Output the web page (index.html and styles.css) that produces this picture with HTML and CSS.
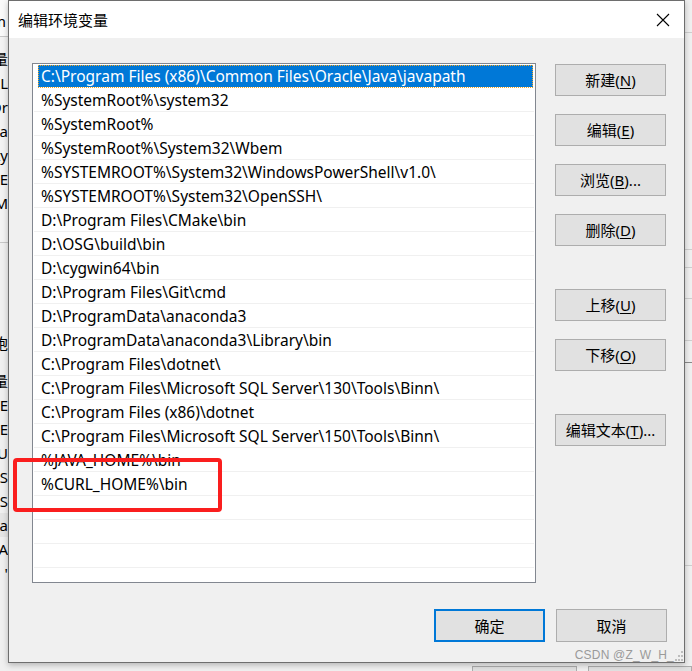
FILE: index.html
```html
<!DOCTYPE html>
<html lang="zh-CN">
<head>
<meta charset="utf-8">
<title>编辑环境变量</title>
<link rel="stylesheet" href="styles.css">
</head>
<body>
<div class="desk">
  <div class="bgwin bgwin-left">
    <div class="bl-top"><span class="frag f1">m</span></div>
    <div class="bl-mid">
      <div class="frag">变量</div>
      <div class="frag">URL</div>
      <div class="frag">Or</div>
      <div class="frag">ta</div>
      <div class="frag">ty</div>
      <div class="frag">TE</div>
      <div class="frag">M</div>
    </div>
    <div class="bl-low">
      <div class="frag">砲</div>
      <div class="frag gap">变量</div>
      <div class="frag">TE</div>
      <div class="frag">TE</div>
      <div class="frag">IU</div>
      <div class="frag">OS</div>
      <div class="frag">OS</div>
      <div class="frag sel">ta</div>
      <div class="frag">A</div>
      <div class="frag">'</div>
    </div>
  </div>
  <div class="bgwin bgwin-right">
    <div class="br-row r1"></div>
    <div class="br-row r2"></div>
    <div class="br-row r3"></div>
    <div class="br-row r4"></div>
    <div class="br-row r5"></div>
    <div class="br-row r6"></div>
    <div class="br-row r7"></div>
  </div>
  <div class="bgwin bgwin-bottom">
    <div class="bb-btn"></div>
    <div class="bb-btn"></div>
  </div>

  <div class="dialog">
    <div class="titlebar">
      <span class="title">编辑环境变量</span>
      <svg class="close" width="14" height="14" viewBox="0 0 14 14"><path d="M1 1 L13 13 M13 1 L1 13" stroke="#000" stroke-width="1.1" fill="none"/></svg>
    </div>
    <div class="client">
      <div class="main">
        <div class="listbox">
          <div class="row selected"><span>C:\Program Files (x86)\Common Files\Oracle\Java\javapath</span></div>
          <div class="row"><span>%SystemRoot%\system32</span></div>
          <div class="row"><span>%SystemRoot%</span></div>
          <div class="row"><span>%SystemRoot%\System32\Wbem</span></div>
          <div class="row"><span>%SYSTEMROOT%\System32\WindowsPowerShell\v1.0\</span></div>
          <div class="row"><span>%SYSTEMROOT%\System32\OpenSSH\</span></div>
          <div class="row"><span>D:\Program Files\CMake\bin</span></div>
          <div class="row"><span>D:\OSG\build\bin</span></div>
          <div class="row"><span>D:\cygwin64\bin</span></div>
          <div class="row"><span>D:\Program Files\Git\cmd</span></div>
          <div class="row"><span>D:\ProgramData\anaconda3</span></div>
          <div class="row"><span>D:\ProgramData\anaconda3\Library\bin</span></div>
          <div class="row"><span>C:\Program Files\dotnet\</span></div>
          <div class="row"><span>C:\Program Files\Microsoft SQL Server\130\Tools\Binn\</span></div>
          <div class="row"><span>C:\Program Files (x86)\dotnet</span></div>
          <div class="row"><span>C:\Program Files\Microsoft SQL Server\150\Tools\Binn\</span></div>
          <div class="row"><span>%JAVA_HOME%\bin</span></div>
          <div class="row"><span>%CURL_HOME%\bin</span></div>
          <div class="row"></div>
          <div class="row"></div>
          <div class="row"></div>
        </div>
        <div class="sidebtns">
          <button class="btn">新建(<u>N</u>)</button>
          <button class="btn">编辑(<u>E</u>)</button>
          <button class="btn">浏览(<u>B</u>)...</button>
          <button class="btn">删除(<u>D</u>)</button>
          <button class="btn sep">上移(<u>U</u>)</button>
          <button class="btn">下移(<u>O</u>)</button>
          <button class="btn sep">编辑文本(<u>T</u>)...</button>
        </div>
      </div>
      <div class="footer">
        <button class="btn big default">确定</button>
        <button class="btn big">取消</button>
      </div>
    </div>
    <div class="watermark">CSDN @Z_W_H_</div>
    <svg class="grip" width="8" height="10" viewBox="0 0 8 10">
      <rect x="6" y="0" width="2" height="2" fill="#bdbdbd"/>
      <rect x="3" y="4" width="2" height="2" fill="#bdbdbd"/>
      <rect x="6" y="4" width="2" height="2" fill="#bdbdbd"/>
      <rect x="0" y="8" width="2" height="2" fill="#bdbdbd"/>
      <rect x="3" y="8" width="2" height="2" fill="#bdbdbd"/>
      <rect x="6" y="8" width="2" height="2" fill="#bdbdbd"/>
    </svg>
  </div>

  <div class="redbox"></div>
</div>
</body>
</html>
```

FILE: styles.css
```css
* { box-sizing: border-box; }
html, body { margin: 0; padding: 0; }
body {
  width: 692px;
  height: 671px;
  overflow: hidden;
  background: #f0f0f0;
  font-family: "Noto Sans", "Noto Sans CJK SC", sans-serif;
  font-size: 15px;
  color: #000;
}
.desk {
  position: relative;
  width: 692px;
  height: 671px;
  overflow: hidden;
}

/* background windows */
.bgwin { position: absolute; }
.bgwin-left {
  left: -32px;
  top: 0;
  width: 44px;
  height: 671px;
  background: #f3f3f3;
  display: flex;
  flex-direction: column;
  text-align: right;
  line-height: 24px;
}
.bl-top {
  height: 37px;
  background: #fafafa;
  border-bottom: 1px solid #c8c8c8;
  padding-top: 9px;
  line-height: 24px;
}
.bl-mid {
  height: 206px;
  padding-top: 10px;
  border-bottom: 1px solid #c8c8c8;
}
.bl-mid .frag { height: 24px; padding-right: 4px; }
.bl-top .frag { padding-right: 6px; }
.bl-low {
  padding-top: 88px;
  flex: 1;
  background: #f0f0f0;
}
.bl-low .frag { height: 24px; padding-right: 4px; }
.bl-low .gap { margin-top: 14px; }
.bl-low .sel { background: #e5e5e5; }

.bgwin-right {
  left: 684px;
  top: 0;
  width: 20px;
  height: 671px;
  background: #f0f0f0;
}
.br-row { position: absolute; left: 0; right: 0; height: 1px; background: #cfcfcf; }
.r1 { top: 32px; }
.r2 { top: 249px; }
.r3 { top: 267px; }
.r4 { top: 298px; }
.r5 { top: 340px; }
.r6 { top: 362px; background: #8a8a8a; }
.r7 { top: 565px; }

.bgwin-bottom {
  left: 0;
  top: 664px;
  width: 692px;
  height: 7px;
  display: flex;
  gap: 11px;
  padding-left: 472px;
  padding-top: 2px;
}
.bb-btn {
  width: 111px;
  height: 20px;
  border: 1px solid #adadad;
  background: #e1e1e1;
}

/* dialog */
.dialog {
  position: absolute;
  left: 8px;
  top: 0;
  width: 677px;
  height: 663px;
  border: 1px solid #6e6e6e;
  background: #f0f0f0;
  box-shadow: 0 2px 6px rgba(0,0,0,0.25);
  display: flex;
  flex-direction: column;
}
.titlebar {
  height: 37px;
  background: #fff;
  display: flex;
  align-items: center;
  justify-content: space-between;
  padding-left: 9px;
  padding-right: 14px;
}
.title { font-size: 15px; line-height: 20px; }
.close { display: block; }

.client {
  flex: 1;
  display: flex;
  flex-direction: column;
  padding: 25px 17px 0 23px;
}
.main {
  display: flex;
  gap: 19px;
}
.listbox {
  width: 504px;
  height: 520px;
  border: 1px solid #828790;
  background: #fff;
  overflow: hidden;
  padding-left: 1px;
  padding-right: 1px;
}
.row {
  height: 24px;
  border-bottom: 1px solid #f0f0f0;
  padding-top: 1px;
  line-height: 22px;
  padding-left: 7px;
  white-space: nowrap;
  font-size: 15.5px;
}
.row.selected {
  background: #0078d7;
  color: #fff;
  margin: 1px 1px 0 4px;
  height: 23px;
  padding-top: 0;
  line-height: 22px;
  padding-left: 3px;
  border-bottom: 1px solid #fff;
  outline: 1px dotted #f5a623;
  outline-offset: -1px;
}

.sidebtns {
  display: flex;
  flex-direction: column;
  gap: 18px;
  padding-top: 1px;
}
.btn {
  width: 111px;
  height: 32px;
  border: 1px solid #adadad;
  background: #e1e1e1;
  font-family: inherit;
  font-size: 15px;
  color: #000;
  padding: 0;
  line-height: 30px;
  text-align: center;
}
.btn u { text-decoration: underline; text-underline-offset: 2px; }
.sidebtns .sep { margin-top: 25px; }

.footer {
  display: flex;
  justify-content: flex-end;
  gap: 11px;
  margin-top: 26px;
}
.btn.big { height: 33px; }
.btn.default {
  border: 2px solid #0078d7;
}

.watermark {
  position: absolute;
  right: 10px;
  bottom: 0;
  font-family: "Liberation Sans", sans-serif;
  font-size: 12px;
  color: #9a9a9a;
  letter-spacing: 0.2px;
}
.grip {
  position: absolute;
  right: 1px;
  bottom: 1px;
}

.redbox {
  position: absolute;
  left: 13px;
  top: 458px;
  width: 209px;
  height: 54px;
  border: 4px solid #fa1e1e;
  border-radius: 4px;
}
```
